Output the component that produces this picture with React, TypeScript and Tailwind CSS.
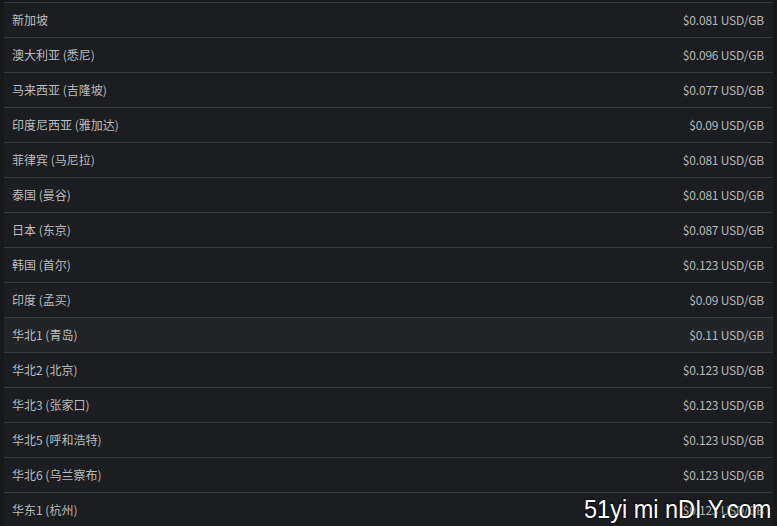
import React from "react";

const rows: [string, string][] = [
  ["新加坡", "$0.081 USD/GB"],
  ["澳大利亚 (悉尼)", "$0.096 USD/GB"],
  ["马来西亚 (吉隆坡)", "$0.077 USD/GB"],
  ["印度尼西亚 (雅加达)", "$0.09 USD/GB"],
  ["菲律宾 (马尼拉)", "$0.081 USD/GB"],
  ["泰国 (曼谷)", "$0.081 USD/GB"],
  ["日本 (东京)", "$0.087 USD/GB"],
  ["韩国 (首尔)", "$0.123 USD/GB"],
  ["印度 (孟买)", "$0.09 USD/GB"],
  ["华北1 (青岛)", "$0.11 USD/GB"],
  ["华北2 (北京)", "$0.123 USD/GB"],
  ["华北3 (张家口)", "$0.123 USD/GB"],
  ["华北5 (呼和浩特)", "$0.123 USD/GB"],
  ["华北6 (乌兰察布)", "$0.123 USD/GB"],
  ["华东1 (杭州)", "$0.123 USD/GB"],
];

export default function App() {
  return (
    <div
      className="relative w-[777px] h-[526px] overflow-hidden bg-[#17181a] px-[4px] pt-[2px]"
      style={{ fontFamily: '"Noto Sans CJK SC", "Noto Sans", sans-serif' }}
    >
      <div className="border-t border-[#38393c] bg-[#1c1d20]">
        {rows.map(([name, price], i) => (
          <div
            key={i}
            className={
              "flex h-[35px] items-center justify-between border-b border-[#38393c] pl-[8px] pr-[9px] text-[12px] text-[#bcbcbc] " +
              (i === 9 ? "bg-[#232427]" : "")
            }
          >
            <span>{name}</span>
            <span className="text-[#b8b8b8] tracking-[-0.2px]">{price}</span>
          </div>
        ))}
      </div>
      <div
        className="absolute left-[584px] top-[494px] whitespace-nowrap text-[25px] leading-[30px] text-white origin-left scale-x-[0.94]"
        style={{ fontFamily: '"Liberation Sans", sans-serif', textShadow: "0 0 2px #000, 0 0 2px #000" }}
      >
        51yi mi nDI Y.com
      </div>
    </div>
  );
}
